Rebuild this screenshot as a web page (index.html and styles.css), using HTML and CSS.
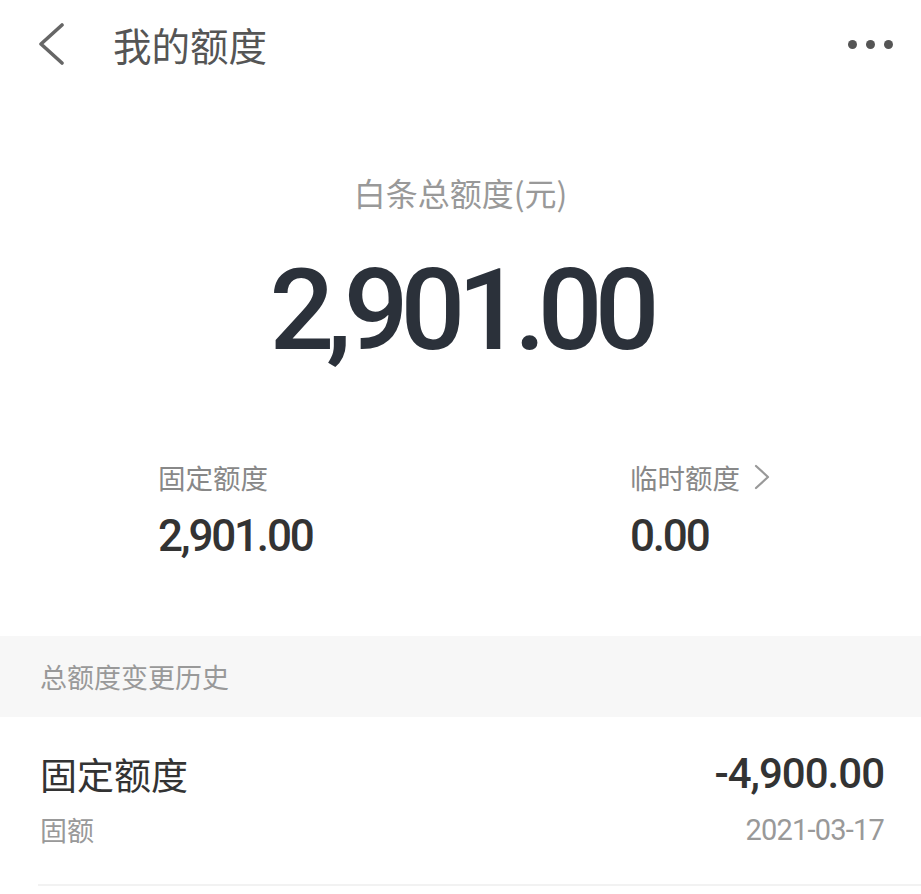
FILE: index.html
```html
<!doctype html>
<html lang="zh-CN">
<head>
    <meta charset="utf-8">
    <title>我的额度</title>
    <link rel="stylesheet" href="styles.css">
</head>
<body>
    <div class="topbar">
        <svg class="back" width="28" height="42" viewBox="0 0 28 42">
            <polyline points="25,2 4,21 25,40" fill="none" stroke="#666" stroke-width="3.6" stroke-linejoin="round" stroke-linecap="round"/>
        </svg>
        <div class="title">我的额度</div>
        <div class="more"><i></i><i></i><i></i></div>
    </div>

    <div class="hero">
        <div class="hero-label">白条总额度(元)</div>
        <div class="hero-amount">2,901.00</div>

        <div class="quota">
            <div class="quota-item">
                <div class="quota-label">固定额度</div>
                <div class="quota-value">2,901.00</div>
            </div>
            <div class="quota-item">
                <div class="quota-label">临时额度
                    <svg class="arrow" width="16" height="26" viewBox="0 0 16 26">
                        <polyline points="2,2 14,13 2,24" fill="none" stroke="#999" stroke-width="2.2" stroke-linecap="round" stroke-linejoin="round"/>
                    </svg>
                </div>
                <div class="quota-value">0.00</div>
            </div>
        </div>
    </div>

    <div class="section-head">总额度变更历史</div>

    <div class="history">
        <div class="record">
            <div class="record-name">固定额度</div>
            <div class="record-amount">-4,900.00</div>
            <div class="record-type">固额</div>
            <div class="record-date">2021-03-17</div>
        </div>
    </div>
</body>
</html>
```
FILE: styles.css
```css
body {
    margin: 0;
    background: #fff;
    font-family: "Noto Sans CJK SC", "Noto Sans", sans-serif;
    color: #333;
}

.topbar {
    display: flex;
    align-items: center;
    height: 88px;
    padding: 0 28px 0 37px;
}

.back { display: block; }

.title {
    margin-left: 48px;
    font-size: 38.5px;
    line-height: 48px;
    color: #555;
}

.more {
    margin-left: auto;
    display: flex;
    gap: 9px;
}

.more i {
    width: 9px;
    height: 9px;
    border-radius: 50%;
    background: #555;
}

.hero { text-align: center; }

.hero-label {
    margin-top: 84px;
    font-size: 32px;
    line-height: 40px;
    color: #999;
}

.hero-amount {
    margin-top: 41px;
    font-family: Roboto, sans-serif;
    font-weight: 500;
    font-size: 114px;
    line-height: 114px;
    letter-spacing: -8px;
    color: #2b313a;
}

.quota {
    display: grid;
    grid-template-columns: 472px 1fr;
    padding-left: 158px;
    margin-top: 90px;
    text-align: left;
}

.quota-label {
    display: flex;
    align-items: center;
    gap: 14px;
    font-size: 27.5px;
    line-height: 40px;
    color: #888;
}

.quota-value {
    margin-top: 13px;
    font-family: Roboto, sans-serif;
    font-weight: 500;
    font-size: 44px;
    line-height: 52px;
    letter-spacing: -2.2px;
    color: #333;
}

.section-head {
    margin-top: 74px;
    height: 81px;
    padding-left: 40px;
    background: #f7f7f7;
    font-size: 27px;
    line-height: 81px;
    color: #999;
}

.history { padding-left: 38px; }

.record {
    display: grid;
    grid-template-columns: 1fr auto;
    row-gap: 14px;
    padding: 33px 37px 36px 2px;
    border-bottom: 2px solid #f2f2f2;
}

.record-name {
    font-size: 37px;
    line-height: 48px;
    color: #333;
}

.record-amount {
    font-family: Roboto, sans-serif;
    font-weight: 500;
    font-size: 42px;
    line-height: 48px;
    letter-spacing: -1px;
    color: #333;
    text-align: right;
}

.record-type {
    font-size: 27px;
    line-height: 36px;
    color: #999;
}

.record-date {
    font-family: Roboto, sans-serif;
    font-size: 29px;
    line-height: 36px;
    letter-spacing: -0.8px;
    color: #999;
    text-align: right;
}
```
